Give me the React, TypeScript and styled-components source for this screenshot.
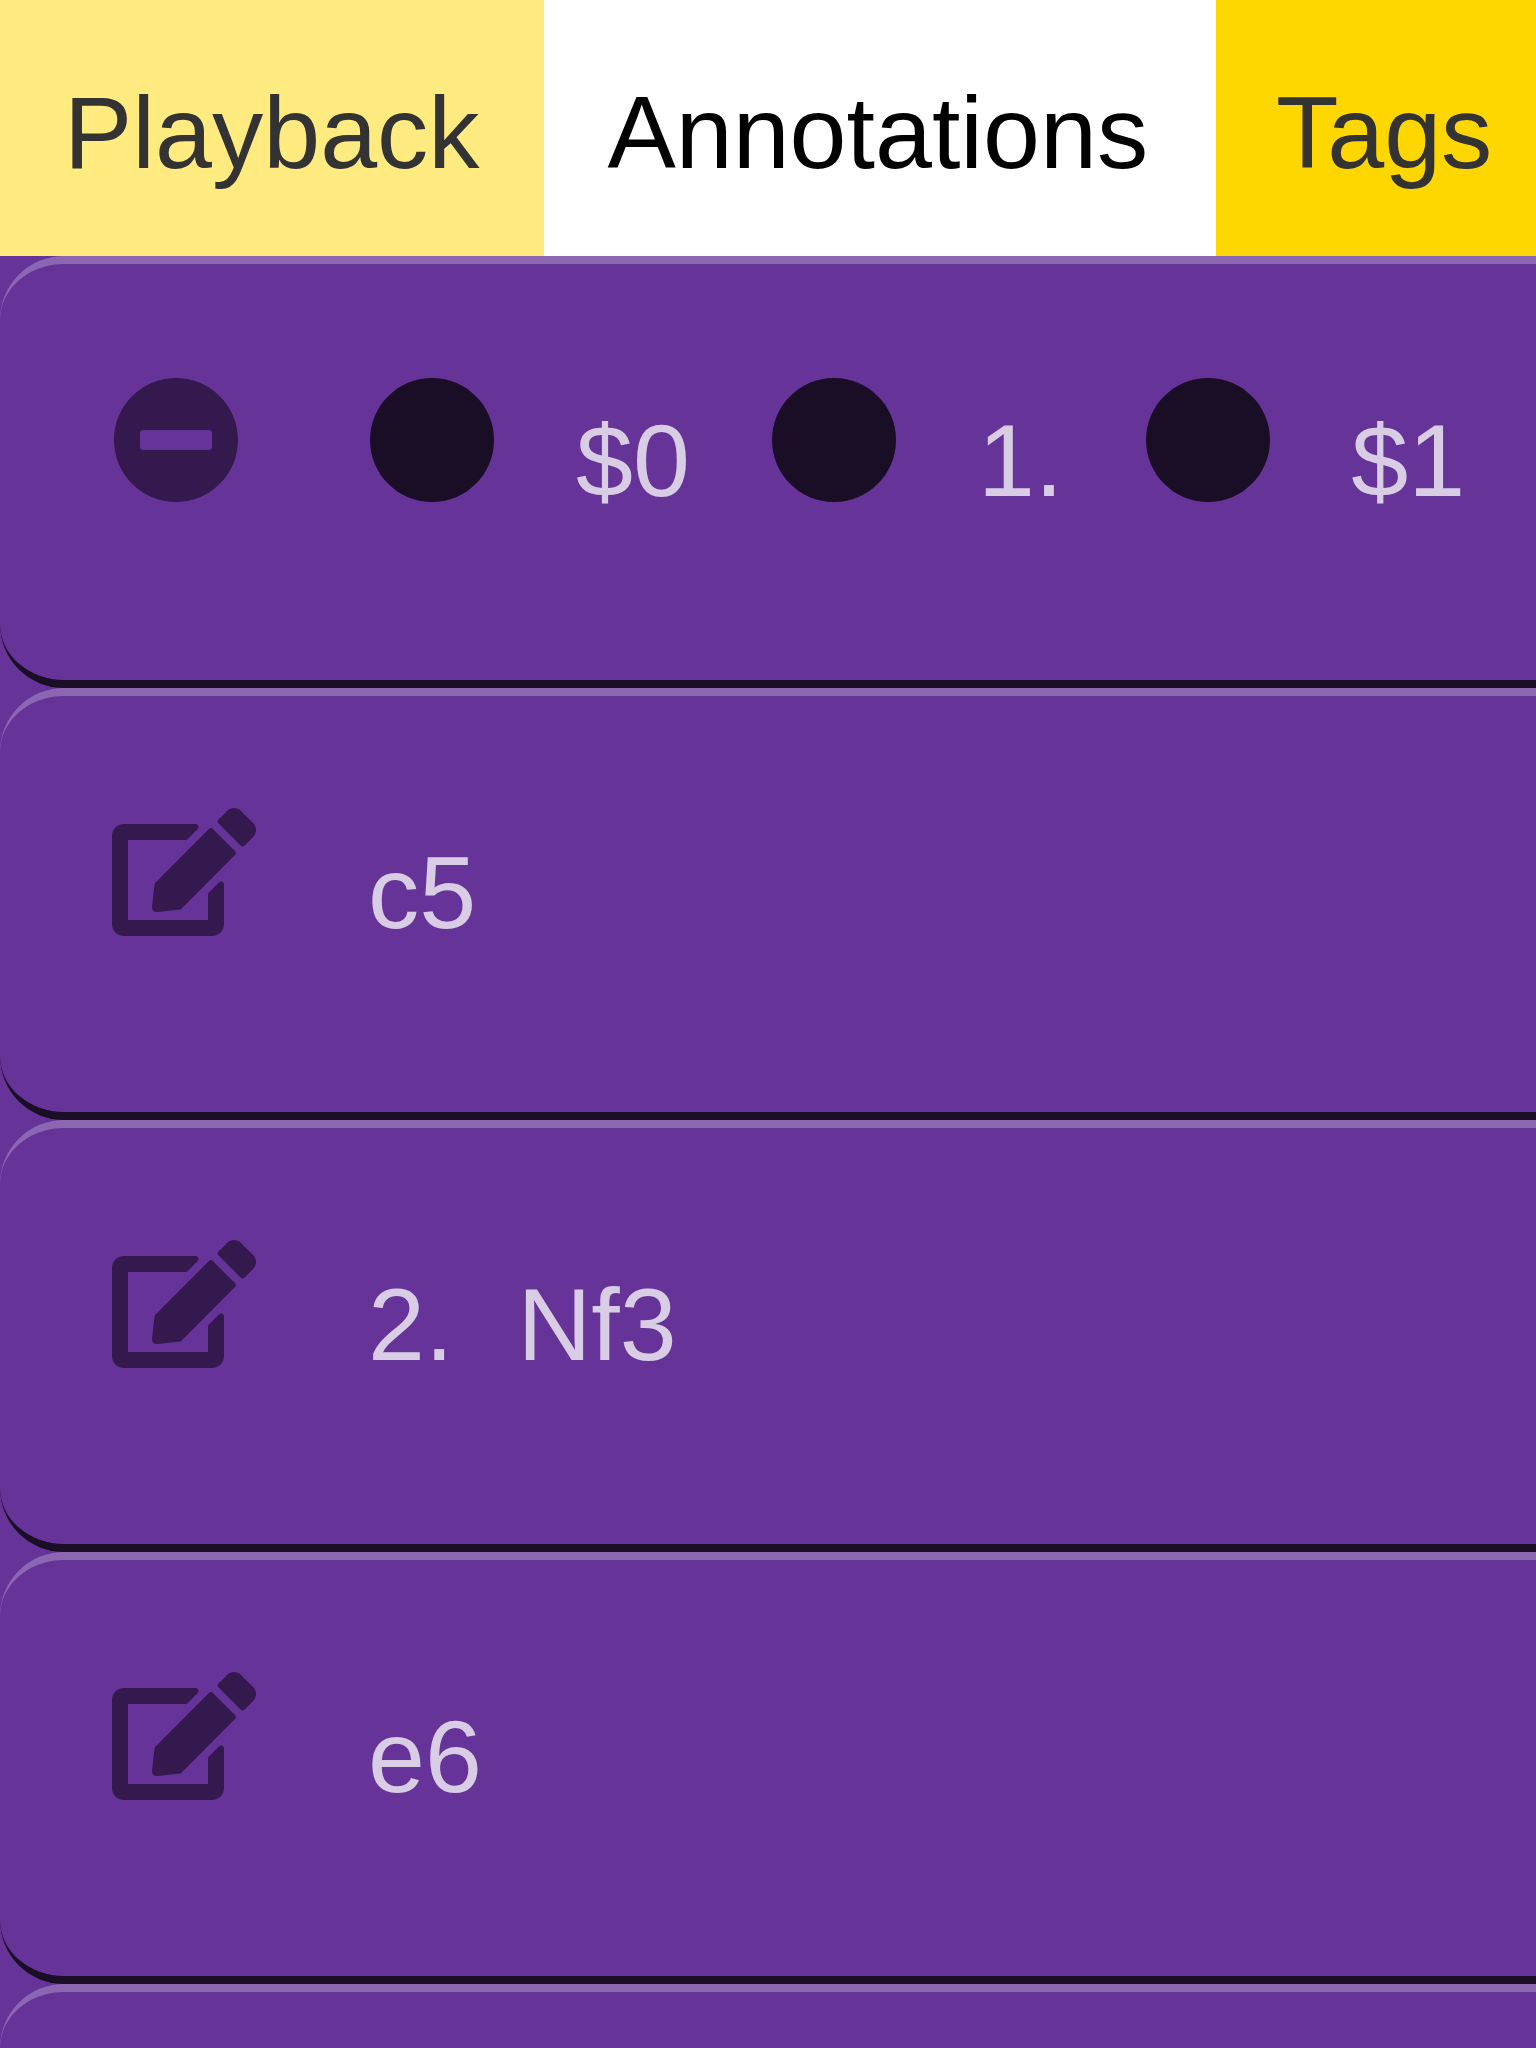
import React from "react";
import styled, { createGlobalStyle } from "styled-components";
import { FaCircle, FaEdit, FaMinusCircle } from "react-icons/fa";

const GlobalStyle = createGlobalStyle`
  html, body {
    margin: 0;
    overflow: hidden;
    background: #663399;
  }
`;

const Screen = styled.main`
  display: flex;
  flex-direction: column;
  width: 1536px;
  height: 2048px;
  overflow: hidden;
  background: #663399;
  font: 102.4px/128px "Liberation Sans", Arial, sans-serif;
  white-space: nowrap;
`;

const TabBar = styled.nav`
  display: flex;
  flex: none;
  height: 256px;
`;

const Tab = styled.div<{ $width: number; $bg: string; $color?: string; $inset?: number }>`
  box-sizing: border-box;
  flex: none;
  width: ${(p) => p.$width}px;
  padding: 69px 0 0 ${(p) => p.$inset ?? 64}px;
  background: ${(p) => p.$bg};
  color: ${(p) => p.$color ?? "#333333"};
`;

const List = styled.div`
  display: flex;
  flex-direction: column;
  flex: none;
  width: 1664px;
`;

const Row = styled.div`
  box-sizing: border-box;
  display: flex;
  align-items: flex-start;
  gap: 64px;
  height: 432px;
  padding: 112px 0 0 112px;
  border-style: solid;
  border-width: 8px 0;
  border-color: #8c66b2 transparent #1a0d26;
  border-radius: 64px;
  color: #d9cce5;
`;

const Action = styled.div<{ $iconWidth: number }>`
  display: flex;
  flex: none;
  width: 192px;
  color: #33194d;

  svg {
    flex: none;
    width: ${(p) => p.$iconWidth}px;
    height: 128px;
  }
`;

const Marks = styled.div`
  display: flex;
  gap: 80px;
`;

const Dot = styled(FaCircle)`
  flex: none;
  width: 128px;
  height: 128px;
  margin: 0 -0.3px 0 0.3px;
  color: #1a0d26;
`;

const Label = styled.span`
  padding-top: 21px;
`;

const moves = [["c5"], ["2.", "Nf3"], ["e6"], []];

export default function App() {
  return (
    <>
      <GlobalStyle />
      <Screen>
        <TabBar>
          <Tab $width={544} $bg="#ffeb80">Playback</Tab>
          <Tab $width={672} $bg="#ffffff" $color="#000000" $inset={63.4}>Annotations</Tab>
          <Tab $width={320} $bg="#ffd700" $inset={60}>Tags</Tab>
        </TabBar>
        <List>
          <Row>
            <Action $iconWidth={128}><FaMinusCircle /></Action>
            <Marks>
              {["$0", "1.", "$1"].map((text) => (
                <React.Fragment key={text}>
                  <Dot />
                  <Label>{text}</Label>
                </React.Fragment>
              ))}
            </Marks>
          </Row>
          {moves.map((parts, i) => (
            <Row key={i}>
              <Action $iconWidth={144}><FaEdit /></Action>
              {parts.map((part) => (
                <Label key={part}>{part}</Label>
              ))}
            </Row>
          ))}
        </List>
      </Screen>
    </>
  );
}
